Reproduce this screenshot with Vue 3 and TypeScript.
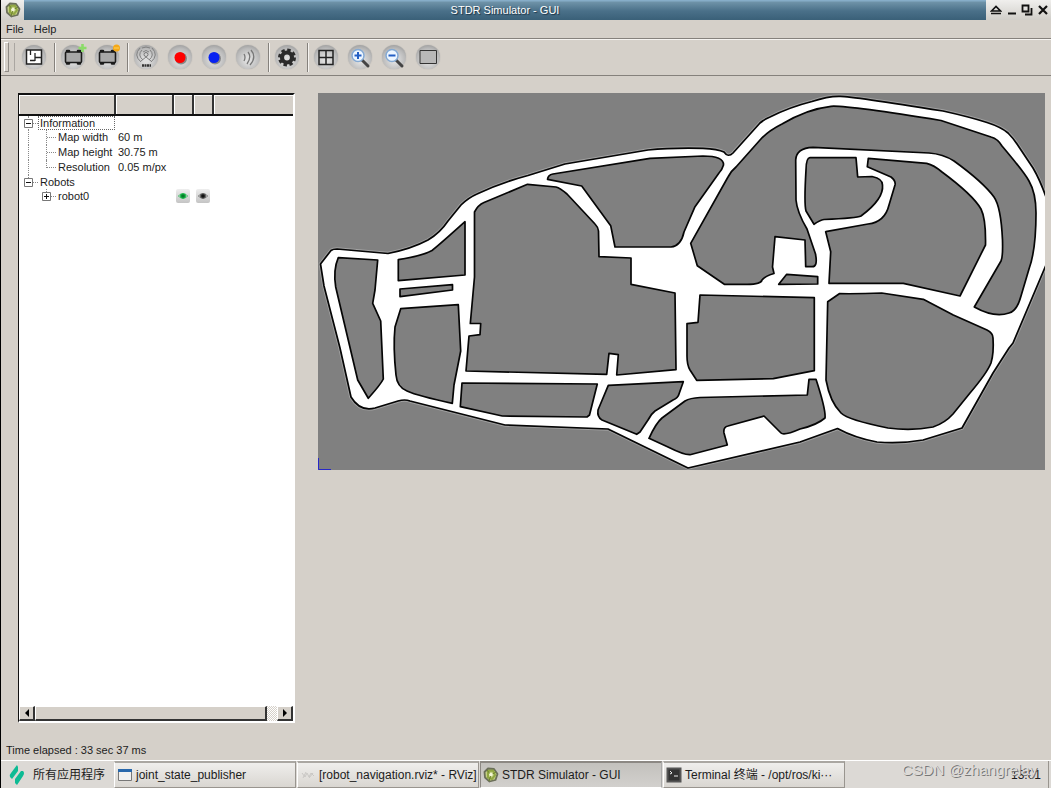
<script setup lang="ts">
import { ref } from 'vue'

interface Tool { id: string; label: string; sep?: boolean }
interface TreeRow { name: string; value?: string; level: number; mark?: string; last?: boolean; eyes?: boolean; focus?: boolean; top?: boolean }
interface Task { title: string; icon: string; active?: boolean }

const tools: Tool[] = [
  { id: 'map', label: 'Load map' },
  { id: 'robot-add', label: 'Load robot', sep: true },
  { id: 'robot-new', label: 'Create robot' },
  { id: 'rfid', label: 'Add RFID tag', sep: true },
  { id: 'thermal', label: 'Add thermal source' },
  { id: 'co2', label: 'Add CO2 source' },
  { id: 'sound', label: 'Add sound source' },
  { id: 'gear', label: 'Properties', sep: true },
  { id: 'grid', label: 'Grid', sep: true },
  { id: 'zoom-in', label: 'Zoom in' },
  { id: 'zoom-out', label: 'Zoom out' },
  { id: 'fit', label: 'Adjusted view' },
]

const rows: TreeRow[] = [
  { name: 'Information', level: 0, mark: '-', focus: true, top: true },
  { name: 'Map width', value: '60 m', level: 1 },
  { name: 'Map height', value: '30.75 m', level: 1 },
  { name: 'Resolution', value: '0.05 m/px', level: 1, last: true },
  { name: 'Robots', level: 0, mark: '-', last: true },
  { name: 'robot0', level: 1, mark: '+', eyes: true },
]

const tasks: Task[] = [
  { title: 'joint_state_publisher', icon: 'window' },
  { title: '[robot_navigation.rviz* - RViz]', icon: 'rviz' },
  { title: 'STDR Simulator - GUI', icon: 'stdr', active: true },
  { title: 'Terminal 终端 - /opt/ros/ki···', icon: 'terminal' },
]

const elapsed = ref('33 sec 37 ms')

const outline =
  'M320.5 264 L331 250.5 Q333 249 337 249 L388 253.5 Q411 249 428 240 Q440 233 448 221 L461 205 Q468 198 477 194 Q500 183 528 175.500 L565 164 L648 150 Q672 147.500 703 148.300 Q718 149 724 152 Q728 158 733 153 L760 123 Q765 119 770 117 Q790 107 812 101.500 Q828 96 840 96.300 Q850 96 943 111 Q970 117 987 122.500 Q1001 127 1008 133 Q1013 138 1017 144 L1033 168 Q1040 180 1046 197 L1046 265 L1013 343 L1009 348 L993 373 L962 428 L923 440 Q900 444 877 442 Q855 438 837.500 428.500 L800 442 L688 468 L608 429 L505 425 L410 401 Q405 399 398 401 L375 408 Q360 412 351 397 L340 348 L324 286 Z'

const blocks: string[] = [
  'M338.300 257.700 L377.700 260 L375 290 L372.700 303.300 L380.700 321 L383.300 379 Q381 384 368.300 398.300 L357.700 380 L335.700 287 Q333 270 338.300 257.700Z',
  'M398.300 259.700 Q422 256 432 250.500 Q438 246 465 221.700 L465 275 L398.300 280.700Z',
  'M400 289 L452.500 284.700 L452.500 290 L400 296.700Z',
  'M400.700 308.700 L458.300 304.700 L460.700 351 L454 385 L452.300 403.300 Q418 396 407 391 Q397 387 396 375 Q393 347 395 327Z',
  'M474.500 212 Q478 205 484 202.500 L527.500 184.300 L556 187 Q560 188 567 194 L595 224 Q598 227 598.500 231 L599 256.700 L631 258 L631 284.300 L675 293 L676 369.700 L616.700 375 L618.300 354.700 L609 353.300 L606.700 374.300 L466 371 L469 336 L480 334.700 L480.700 323.500 L470.300 323.500 L474.500 277Z',
  'M462 383 L597.300 384 L589.500 415 L587 417 L502.300 416 L460.300 406.700Z',
  'M608.300 385.300 L683.300 381.700 L679 394 Q678 398 673 400 L655 411 Q651 414 648 420 L640 432 L636.700 434.300 L602 420 Q597 417 598 410Z',
  'M649 438.300 Q656 423 662 418 L685 401 Q690 398 700 397.500 L807.300 395 L809 379.300 L816 379.300 Q826 410 825 418 Q817 425 800 429 Q784 436 781 433 L764 416 L728 426 Q723 427 724 433 L727.300 445 L690 454.700 Q684 455 668 447Z',
  'M700 295 L814.300 297.700 L814.300 370.700 L773.300 378.700 L696.700 380.300 L690 370 Q687 365 687 356 L687 323.700 L698 322.300Z',
  'M839.300 293.700 Q860 294 881.700 293 L923.300 299.300 L953.300 315 L987 330 Q993 333 993 338 Q994 353 991 363 Q987 373 970 393 L953 414 Q945 423 933 427 Q912 431 888 428 Q848 420 841 413 Q830 402 826 380 L827.700 301.700Z',
  'M547.500 179.300 Q548 175 553 174 L650 158.300 L703 156 Q724 156 723.500 165 Q722 170 719 173 L695 206.700 L684 232 Q681 246 671 247 L615 247 L610.700 225.700 L581.700 186Z',
  'M690.700 243.300 L728 177 Q731 171 736 167 L760 140 Q768 131 782 124 Q807 109 831 106.300 Q845 105 941 120.500 L991 137 Q998 139 1002 146 Q1024 172 1029 181 Q1036 193 1036 213 Q1036 250 1029 269 L1021 296 Q1017 311 1009 313 Q994 318 974.300 307 L1001 261 Q1003 257 1002.500 240 Q1001 207 994 197 Q983 182 954 161 Q943 154 929 153 L813 147.300 Q796 148 795.700 160 L796 200 Q797 212 807 229 L815.500 254 Q818 267 812 266.700 L805.700 266.700 L805 240 L775 236.700 L772.500 267 L774 273.500 Q765 276 762 280 Q761 285 743 284.300 L724.300 284.300 L697.300 265.700Z',
  'M778.700 284.300 L786.700 274.300 L817.700 276.700 L817.700 284Z',
  'M810 157.500 L856 157.700 L857.700 177 L872 176.500 Q883 179 882.500 185 Q884 199 861 216 Q857 218 824 219.500 Q820 220 814 224.300 L806 211 Q804 204 806 170 Q806 158 810 157.500Z',
  'M868.300 158.300 L926.700 163.300 Q934 165 942 172 Q973 195 981 209 Q986 219 985.500 245 L960 296 L903.300 283.300 L829 283.300 L830.700 251.700 L825.700 231.700 L868 224 Q885 222 889 205 L895 185 Q896 181 891 177 L867.300 166.700Z',
]
</script>

<template>
  <div class="desktop">
    <header class="titlebar">
      <span class="app-icon">
        <svg width="16" height="16" viewBox="0 0 16 16"><g fill="none"><path d="M5 1.500L11 2L14.500 7L12.500 13L6.500 14.500L2 10.500L1.500 5Z" fill="#c3cf83" stroke="#6b6f5a" stroke-width="1.800" stroke-linejoin="round" /><path d="M5 4L10 3.500L12 8L9 12L5 10.500Z" stroke="#91a743" stroke-width="2" /><path d="M8 8L4 3M8 8L13 5M8 8L6 14" stroke="#6f8430" /><circle cx="8" cy="7.500" r="1.800" fill="#f3f6d5" /></g></svg>
      </span>
      <h1>STDR Simulator - GUI</h1>
      <div class="window-buttons">
        <button aria-label="Shade"><svg width="12" height="12" viewBox="0 0 12 12"><path d="M1.500 7L6 2.500L10.500 7ZM1 9.500H11" fill="none" stroke="#111" stroke-width="1.700" /></svg></button>
        <button aria-label="Minimize"><svg width="12" height="12" viewBox="0 0 12 12"><path d="M2 9.500H10" stroke="#111" stroke-width="2" /></svg></button>
        <button aria-label="Restore"><svg width="12" height="12" viewBox="0 0 12 12"><path d="M1.500 1.500H7.500V7.500H1.500ZM10.500 4V10.500H4" fill="none" stroke="#111" stroke-width="1.800" /></svg></button>
        <button aria-label="Close"><svg width="12" height="12" viewBox="0 0 12 12"><path d="M2 2L10 10M10 2L2 10" stroke="#111" stroke-width="2.200" /></svg></button>
      </div>
    </header>

    <nav class="menubar">
      <button>File</button>
      <button>Help</button>
    </nav>

    <div class="toolbar" role="toolbar">
      <span class="grip"></span>
      <template v-for="t in tools" :key="t.id">
        <span v-if="t.sep" class="separator"></span>
        <button class="tool" :aria-label="t.label">
          <span class="disc">
            <svg width="26" height="26" viewBox="0 0 26 26" fill="none">
              <template v-if="t.id === 'map'">
                <path d="M5.500 6H20.500V20H5.500Z" fill="#fff" stroke="#222" stroke-width="1.500" />
                <path d="M9.500 6V11M14 9V17M14 13.500H20M9 16.500H14" stroke="#222" stroke-width="1.300" />
              </template>
              <template v-else-if="t.id.startsWith('robot')">
                <rect x="5.500" y="8" width="16" height="10.500" rx="1" fill="#a8a8a8" stroke="#1b1b1b" stroke-width="1.600" />
                <path d="M7 7H9M18 7H20M7 19.500H9M18 19.500H20" stroke="#1b1b1b" stroke-width="2.500" stroke-linecap="round" />
                <path v-if="t.id === 'robot-add'" d="M22.500 0V8M18.500 4H26.500" stroke="#8bdc68" stroke-width="2.600" />
                <g v-else><circle cx="22.500" cy="4" r="3.500" fill="#f5a817" /><path d="M20 4H25" stroke="#ffd45c" /></g>
              </template>
              <template v-else-if="t.id === 'rfid'">
                <path d="M8 18Q0 11 7 4M18 18Q26 11 19 4M10 16Q4 11 9 6M16 16Q22 11 17 6M9 4Q13 2 17 4M10 8Q13 5 16 8M8 17L13 13L18 17" stroke="#808080" />
                <circle cx="13" cy="10.500" r="2" stroke="#777" />
                <path d="M9 21.500H18" stroke="#333" stroke-width="2.500" stroke-dasharray="2 .5" />
              </template>
              <template v-else-if="t.id === 'thermal' || t.id === 'co2'">
                <circle cx="14" cy="14.500" r="6" fill="#555" opacity=".6" />
                <circle cx="13" cy="13.500" r="5.500" :fill="t.id === 'thermal' ? '#ff0000' : '#0722f2'" />
              </template>
              <path v-else-if="t.id === 'sound'" d="M9 10Q11 13 9 17M13 8Q17 13 12 20M16 6Q22 13 15 21" stroke="#777" stroke-width="1.300" />
              <template v-else-if="t.id === 'gear'">
                <circle cx="13" cy="13.500" r="7.500" stroke="#2b2b2b" stroke-width="3" stroke-dasharray="3.400 2.490" />
                <circle cx="13" cy="13.500" r="5" stroke="#2b2b2b" stroke-width="4.200" />
              </template>
              <path v-else-if="t.id === 'grid'" d="M6 6.500H20V20.500H6ZM13 6.500V20.500M6 13.500H20" stroke="#222" stroke-width="1.500" />
              <template v-else-if="t.id.startsWith('zoom')">
                <path d="M15 16L21 22" stroke="#444" stroke-width="3" stroke-linecap="round" />
                <circle cx="11" cy="11.500" r="6" fill="#edf6ff" stroke="#84a9d3" stroke-width="1.500" />
                <path d="M7.500 11.500H14.500" stroke="#235fc4" stroke-width="2" />
                <path v-if="t.id === 'zoom-in'" d="M11 8V15" stroke="#235fc4" stroke-width="2" />
              </template>
              <path v-else d="M5 6.500H21.500V19.500H5Z" fill="#b8b8b8" stroke="#333" />
            </svg>
          </span>
        </button>
      </template>
    </div>

    <main class="workspace">
      <section class="tree-panel">
        <table>
          <colgroup><col class="c-name"><col class="c-value"><col class="c-eye"><col class="c-eye"><col></colgroup>
          <thead><tr><th></th><th></th><th></th><th></th><th></th></tr></thead>
          <tbody>
            <tr v-for="r in rows" :key="r.name" :class="['level' + r.level, { last: r.last, top: r.top, leaf: r.level && !r.mark, robot: r.eyes }]">
              <td class="name">
                <div class="node">
                  <button v-if="r.mark" class="expander" :aria-label="'Toggle ' + r.name">
                    <svg width="9" height="9" viewBox="0 0 9 9"><path d="M.5 .5H8.500V8.500H.5Z" fill="#fff" stroke="#777" /><path d="M2 4.500H7" stroke="#111" /><path v-if="r.mark === '+'" d="M4.500 2V7" stroke="#111" /></svg>
                  </button>
                  <span class="dots"></span>
                  <span class="label" :class="{ focus: r.focus }">{{ r.name }}</span>
                </div>
              </td>
              <td class="value">{{ r.value }}</td>
              <td v-for="n in 2" :key="n" class="eye-cell">
                <button v-if="r.eyes" class="eye" :aria-label="n === 1 ? 'Robot visible' : 'Follow robot'">
                  <svg width="10" height="8" viewBox="0 0 10 8"><path d="M0 4Q5 -2 10 4Q5 10 0 4Z" :fill="n === 1 ? '#14b544' : '#555'" /><circle cx="5" cy="4" r="1.800" :fill="n === 1 ? '#067a2a' : '#111'" /><path d="M2 2.500Q1 4 2 5.500M8 2.500Q9 4 8 5.500" stroke="#ddd" fill="none" stroke-width=".7" /></svg>
                </button>
              </td>
              <td></td>
            </tr>
          </tbody>
        </table>
        <div class="scrollbar">
          <button class="bevel" aria-label="Scroll left"><svg width="6" height="8" viewBox="0 0 6 8"><path d="M5 0V8L1 4Z" /></svg></button>
          <span class="thumb bevel"></span>
          <span class="track"></span>
          <button class="bevel" aria-label="Scroll right"><svg width="6" height="8" viewBox="0 0 6 8"><path d="M1 0V8L5 4Z" /></svg></button>
        </div>
      </section>

      <section class="map-view">
        <svg viewBox="318 93 727 377" role="img" aria-label="Simulation map">
          <rect x="318" y="93" width="727" height="377" fill="#808080" />
          <g stroke="#bdbdbd" stroke-width="3.500" fill="none" opacity=".55">
            <path :d="outline" />
            <path v-for="(b, i) in blocks" :key="i" :d="b" />
          </g>
          <g stroke="#050505" stroke-width="1.700" stroke-linejoin="round">
            <path :d="outline" fill="#fff" />
            <path v-for="(b, i) in blocks" :key="i" :d="b" fill="#808080" />
          </g>
          <path d="M318.500 458V469.500H331" fill="none" stroke="#2727c8" />
        </svg>
      </section>
    </main>

    <div class="status">Time elapsed : {{ elapsed }}</div>

    <footer class="taskbar">
      <button class="launcher">
        <svg width="16" height="20" viewBox="0 0 16 20"><path d="M8 0L9 2V6L3 14L1 12Q0 10 2 8ZM14 6Q16 8 14 11L8 20L6 18V14L12 6Z" fill="#0dbb94" /></svg>
        <span>所有应用程序</span>
      </button>
      <div class="tasks">
        <button v-for="t in tasks" :key="t.title" class="task" :class="{ active: t.active }">
          <svg width="16" height="16" viewBox="0 0 16 16" fill="none">
            <template v-if="t.icon === 'window'"><path d="M1.500 2.500H14.500V13.500H1.500Z" fill="#f1f1f1" stroke="#777" /><path d="M1 3.500H15" stroke="#2868ac" stroke-width="3" /></template>
            <path v-else-if="t.icon === 'rviz'" d="M2 6L5 10L7 6L9 10L11 6L14 9M3 11L6 5M9 11L13 6" stroke="#c9c7c4" />
            <template v-else-if="t.icon === 'stdr'"><path d="M5 1.500L11 2L14.500 7L12.500 13L6.500 14.500L2 10.500L1.500 5Z" fill="#c3cf83" stroke="#6b6f5a" stroke-width="1.800" stroke-linejoin="round" /><path d="M5 4L10 3.500L12 8L9 12L5 10.500Z" stroke="#91a743" stroke-width="2" /><path d="M8 8L4 3M8 8L13 5M8 8L6 14" stroke="#6f8430" /><circle cx="8" cy="7.500" r="1.800" fill="#f3f6d5" /></template>
            <template v-else><path d="M1.500 1.500H14.500V14.500H1.500Z" fill="#333" stroke="#555" stroke-width="2" /><path d="M4 4L6 6L4 7M8 9H12" stroke="#eee" /></template>
          </svg>
          <span>{{ t.title }}</span>
        </button>
      </div>
      <time>13:01</time>
      <span class="end-handle"></span>
      <span class="watermark">CSDN @zhangrelay</span>
    </footer>
  </div>
</template>

<style>
body { margin: 0; background: #d5d0c9; }
</style>

<style scoped>
.desktop { box-sizing: border-box; min-height: 100vh; display: flex; flex-direction: column; border-left: 1px solid #000; background: #d5d0c9; color: #1c1c1c; font: 11px/14px "Liberation Sans", "Noto Sans CJK SC", sans-serif; }
button { font: inherit; color: inherit; background: none; border: 0; padding: 0; margin: 0; }
svg { display: block; flex: none; }

.titlebar { height: 20px; display: flex; background: linear-gradient(#86adc8 0 1px, #6f93a8 2px, #4a7089 11px, #3a6078); }
.app-icon { width: 23px; display: flex; align-items: center; justify-content: center; background: linear-gradient(#f0efed, #d0cec9); }
h1 { flex: 1; margin: 0; text-align: center; color: #fff; font-size: 11px; font-weight: 400; line-height: 20px; text-shadow: 1px 1px 1px #1c3445; }
.window-buttons { width: 65px; display: flex; align-items: center; justify-content: space-between; padding: 0 2px 0 4px; box-sizing: border-box; background: linear-gradient(#f0efed, #d0cec9); }

.menubar { height: 18px; display: flex; align-items: center; gap: 10px; padding: 0 5px; border-bottom: 1px solid #85817c; }
.toolbar { height: 34px; display: flex; align-items: center; border-top: 1px solid #f5f3f0; border-bottom: 1px solid #85817c; padding: 0 0 1px 3px; }
.grip { box-sizing: border-box; width: 5px; height: 30px; margin-right: 8px; border: 1px solid #8f8b86; border-left-color: #fff; border-top-color: #fff; box-shadow: 6px 0 0 -1px #d5d0c9, 7px 0 0 -1px #aaa6a1; }
.tool { width: 34px; height: 30px; display: flex; align-items: center; justify-content: center; }
.disc { width: 24px; height: 24px; display: flex; align-items: center; justify-content: center; border-radius: 50%; background: radial-gradient(circle at 50% 62%, #dedede 15%, #b9b9b9 60%, #858585); box-shadow: 0 0 1px #999; }
.disc svg { overflow: visible; }
.separator { box-sizing: border-box; width: 5px; height: 29px; border-right: 1px solid #f5f3f0; position: relative; }
.separator::before { content: ""; position: absolute; right: 0; top: 0; bottom: 0; border-left: 1px solid #85817c; }

.workspace { flex: 1; display: grid; grid-template-columns: 277px minmax(0, 1fr); gap: 23px; padding: 17px 6px 18px 17px; }
.tree-panel { box-sizing: border-box; display: flex; flex-direction: column; background: #fff; border: 1px solid #111; border-top-width: 2px; border-right: 2px solid #fff; border-bottom: 2px solid #fff; }
table { width: 100%; table-layout: fixed; border-collapse: collapse; }
.c-name { width: 96px; }
.c-value { width: 58px; }
.c-eye { width: 20px; }
th { height: 19px; padding: 0; background: #d5d0c9; border-right: 2px solid #333; border-bottom: 2px solid #111; box-shadow: inset 1px 1px 0 #fff; }
th:last-child { border-right: 0; }
td { padding: 0; height: 15px; line-height: 15px; white-space: nowrap; position: relative; }
.level0 td, .robot td { height: 14px; line-height: 14px; }
.node { display: flex; align-items: center; padding-left: 5px; height: 14px; }
.level1 .node { padding-left: 23px; }
.leaf .node { padding-left: 28px; height: 15px; }
.dots { width: 5px; border-top: 1px dotted #888; }
.leaf .dots { width: 9px; }
.label { padding-left: 2px; }
.label.focus { flex: 1; outline: 1px dotted #666; outline-offset: -1px; }
.expander { position: relative; z-index: 1; width: 9px; height: 9px; }
.name::before { content: ""; position: absolute; left: 9px; top: 0; bottom: 0; border-left: 1px dotted #888; }
.level0.last .name::before { bottom: 50%; }
.robot .name::before { left: 27px; bottom: 50%; }
.leaf .name::after { content: ""; position: absolute; left: 27px; top: 0; bottom: 0; border-left: 1px dotted #888; }
.leaf.last .name::after { bottom: 50%; }
.value { padding-left: 3px; }
.eye { width: 14px; height: 14px; margin-left: 3px; display: flex; align-items: center; justify-content: center; background: linear-gradient(#eee, #c4c4c4); border-radius: 2px; }
.scrollbar { height: 15px; margin-top: auto; display: flex; }
.bevel { box-sizing: border-box; background: #d5d0c9; border: 1px solid #fff; border-right: 2px solid #333; border-bottom: 2px solid #333; }
.scrollbar button { width: 16px; display: flex; align-items: center; justify-content: center; }
.thumb { flex: 1; }
.track { width: 10px; background: repeating-conic-gradient(#fff 0 25%, #d5d0c9 0 50%) 0 0 / 2px 2px; }

.map-view svg { width: 100%; height: auto; }

.status { padding: 2px 5px 3px; }

.taskbar { position: relative; height: 27px; display: flex; align-items: center; border-top: 1px solid #fff; background: #dcd9d5; font-size: 12px; }
.launcher { width: 113px; display: flex; align-items: center; gap: 8px; padding-left: 8px; }
.tasks { align-self: stretch; flex: 0 1 731px; min-width: 0; display: grid; grid-template-columns: repeat(4, minmax(0, 1fr)); gap: 1px; }
.task { min-width: 0; display: flex; align-items: center; gap: 3px; padding: 0 2px; white-space: nowrap; text-align: left; overflow: hidden; border: 1px solid #fff; border-top: 2px solid #aaa7a2; border-right: 1px solid #99958f; border-bottom: 1px solid #99958f; background: linear-gradient(#efeeec, #d9d6d1); }
.task.active { background: linear-gradient(#c3c1bd, #d2d0cd); border-color: #8c8883 #aaa #fff #8c8883; }
time { margin-left: auto; padding-right: 7px; }
.end-handle { align-self: stretch; width: 2px; border-left: 1px solid #99958f; }
.watermark { position: absolute; right: 14px; top: 0; font-size: 15px; line-height: 18px; color: #dedcd9; text-shadow: 1px 1px 0 #777; }
</style>
